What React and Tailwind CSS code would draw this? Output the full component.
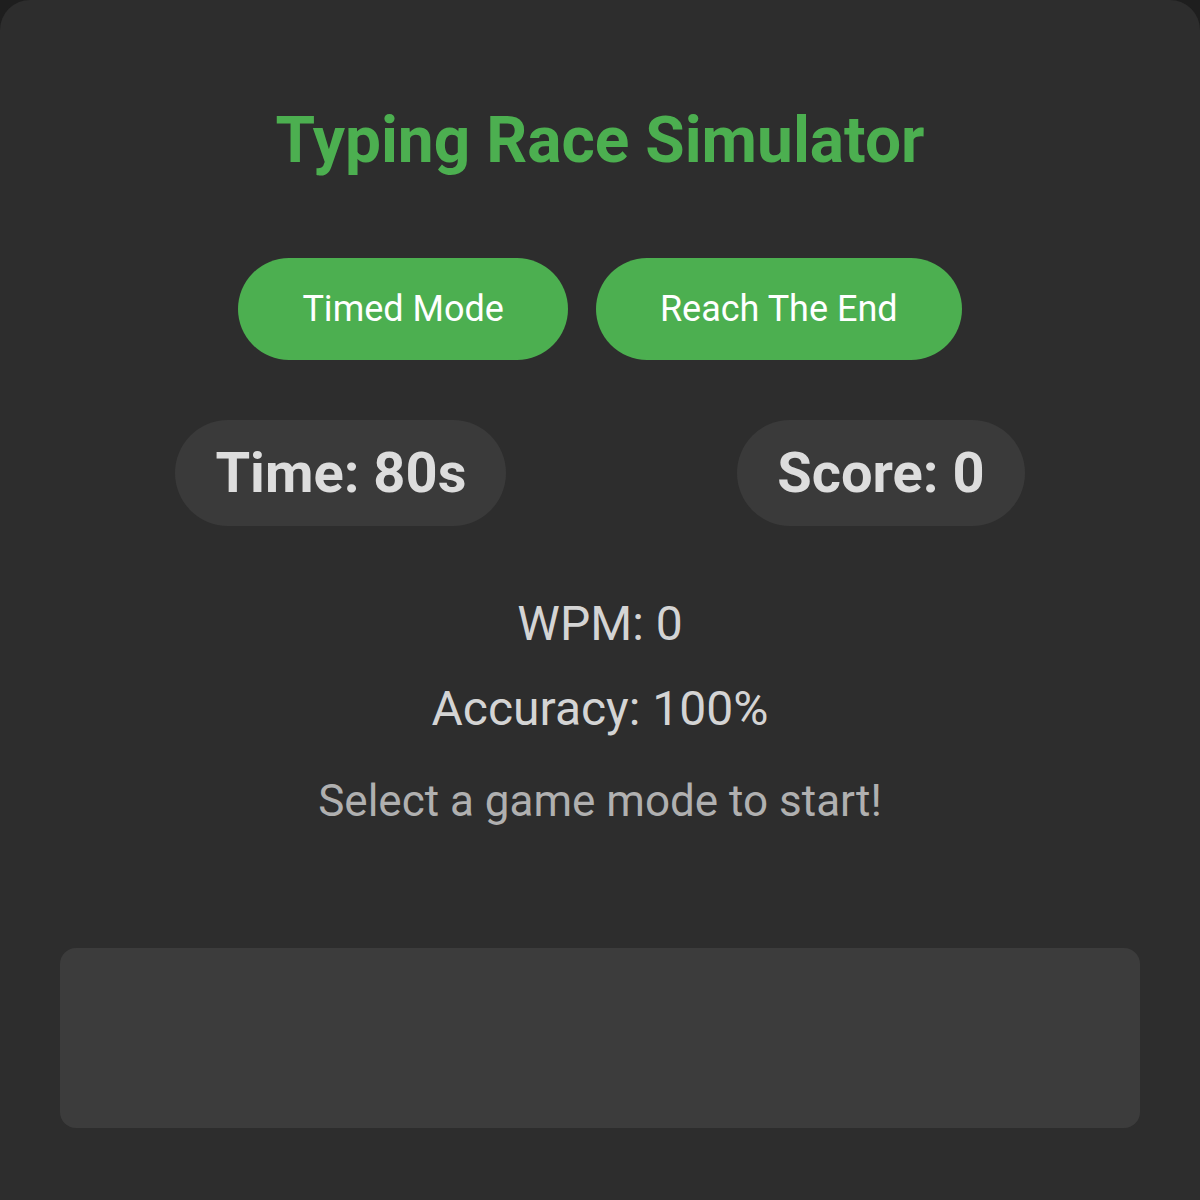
export default function App() {
  return (
    <div className="w-[1200px] h-[1200px] overflow-hidden bg-[#1e1e1e]" style={{ fontFamily: 'Roboto, "Noto Sans", sans-serif' }}>
      <div className="h-[1240px] rounded-t-[30px] bg-[#2d2d2d] px-[60px] pt-[60px] flex flex-col items-center">
        <h1 className="mt-[43px] text-[64px] leading-[75px] font-bold text-[#4caf50]">Typing Race Simulator</h1>
        <div className="mt-[80px] flex gap-[28px]">
          <button className="h-[102px] px-[64px] rounded-full bg-[#4caf50] text-white text-[36px] leading-[42px]">Timed Mode</button>
          <button className="h-[102px] px-[64px] rounded-full bg-[#4caf50] text-white text-[36px] leading-[42px]">Reach The End</button>
        </div>
        <div className="mt-[60px] w-full flex justify-around">
          <div className="h-[106px] px-[40px] rounded-full bg-[#3a3a3a] text-[#dddddd] text-[56px] leading-[106px] font-bold">Time: 80s</div>
          <div className="h-[106px] px-[40px] rounded-full bg-[#3a3a3a] text-[#dddddd] text-[56px] leading-[106px] font-bold">Score: 0</div>
        </div>
        <div className="mt-[70px] text-[48px] leading-[56px] text-[#d4d4d4]">WPM: 0</div>
        <div className="mt-[29px] text-[48px] leading-[56px] text-[#d4d4d4]">Accuracy: 100%</div>
        <div className="mt-[38px] text-[44px] leading-[52px] text-[#b0b0b0]">Select a game mode to start!</div>
        <div className="mt-[121px] w-full h-[180px] rounded-[16px] bg-[#3c3c3c]"></div>
      </div>
    </div>
  );
}
